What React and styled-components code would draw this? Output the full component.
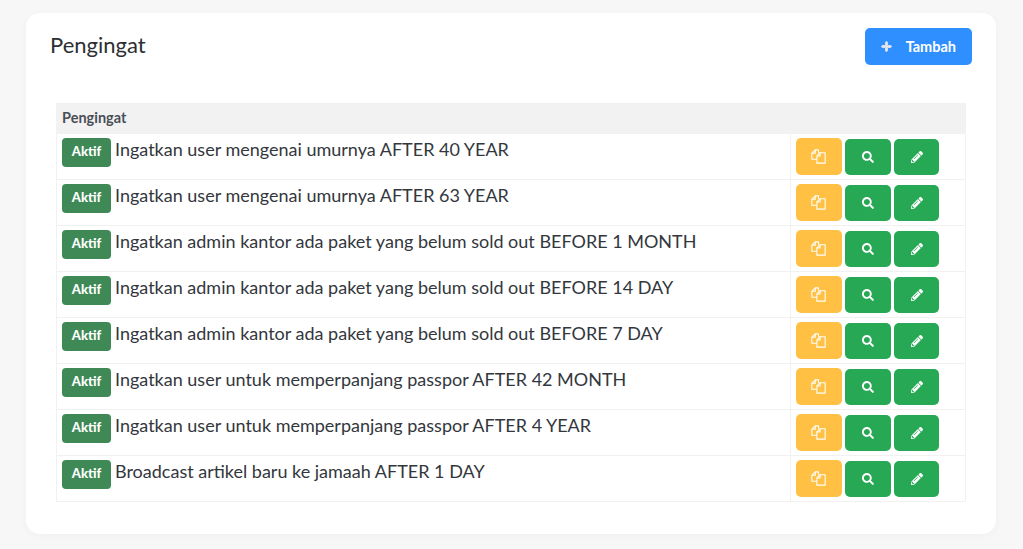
import styled, { createGlobalStyle } from 'styled-components';
import { FaPlus, FaSearch, FaPencilAlt } from 'react-icons/fa';

const GlobalStyle = createGlobalStyle`
  html, body {
    margin: 0;
    padding: 0;
    background-color: #f7f7f7;
    font-family: "Lato", "Noto Sans", sans-serif;
    overflow: hidden;
  }
`;

const Page = styled.div`
  height: 549px;
  padding: 13px 27px 15px 26px;
  box-sizing: border-box;
`;

const Card = styled.div`
  height: 521px;
  box-sizing: border-box;
  padding: 15px 24px 0 24px;
  background-color: #fff;
  border-radius: 14px;
  box-shadow: 0 2px 10px rgba(0, 0, 0, 0.03);
`;

const Header = styled.div`
  display: flex;
  justify-content: space-between;
  align-items: flex-start;
  height: 75px;
`;

const Title = styled.h2`
  margin: 4px 0 0;
  font-size: 22px;
  line-height: 26px;
  font-weight: 400;
  color: #2b2f33;
`;

const AddButton = styled.button`
  display: flex;
  align-items: center;
  gap: 14px;
  height: 37px;
  padding: 0 16px 1px;
  border: none;
  border-radius: 5px;
  background-color: #2f8fff;
  color: #fff;
  font-family: inherit;
  font-size: 14.5px;
  font-weight: 700;

  svg {
    font-size: 11px;
    color: #e3e7ec;
    stroke: currentColor;
    stroke-width: 40;
  }
`;

const Table = styled.table`
  width: 910px;
  margin-left: 6px;
  border-collapse: separate;
  border-spacing: 0;
  table-layout: fixed;
`;

const HeadCell = styled.th`
  box-sizing: border-box;
  height: 31px;
  width: ${(p) => (p.$actions ? '176px' : 'auto')};
  padding: 0 6px 2px;
  background-color: #f2f2f2;
  text-align: left;
  font-size: 14.5px;
  font-weight: 700;
  color: #4a4f57;
`;

const TextCell = styled.td`
  box-sizing: border-box;
  height: 46px;
  padding: 4px 5px 0 5px;
  border-left: 1px solid #f1f1f1;
  border-bottom: 1px solid #f1f1f1;
  vertical-align: top;
`;

const ActionCell = styled.td`
  box-sizing: border-box;
  height: 46px;
  padding: 4px 5px 0 5px;
  border-left: 1px solid #f1f1f1;
  border-right: 1px solid #f1f1f1;
  border-bottom: 1px solid #f1f1f1;
  vertical-align: top;
`;

const CellLine = styled.div`
  display: flex;
  align-items: flex-start;
  gap: 4px;
`;

const Badge = styled.span`
  display: inline-flex;
  align-items: center;
  justify-content: center;
  flex: none;
  box-sizing: border-box;
  width: 49px;
  height: 29px;
  padding-bottom: 3px;
  border-radius: 4px;
  background-color: #3e8955;
  color: #fff;
  font-size: 13px;
  font-weight: 900;
`;

const Message = styled.span`
  font-size: 18px;
  line-height: 22px;
  color: #33373d;
`;

const Actions = styled.div`
  display: flex;
  align-items: flex-end;
  gap: 3px;
`;

const ActionButton = styled.button`
  display: flex;
  align-items: center;
  justify-content: center;
  width: ${(p) => p.$width}px;
  height: ${(p) => p.$height}px;
  padding: 0;
  border: none;
  border-radius: 5px;
  background-color: ${(p) => p.$color};
  color: #fff;
  font-size: 12px;
`;

const CopySvg = styled.svg`
  margin-right: 1px;
  fill: none;
  stroke: #fff;
  stroke-width: 1;
  stroke-linejoin: round;
`;

const CopyIcon = () => (
  <CopySvg width="15" height="15" viewBox="0 0 14 14">
    <path d="M5.5 9.5H0.8V4L4 0.8H7V3.5" />
    <path d="M0.8 4H4V0.8" />
    <path d="M5.5 6.5L8.5 3.5H13.2V13.2H5.5Z" />
    <path d="M5.5 6.5H8.5V3.5" />
  </CopySvg>
);

const reminders = [
  'Ingatkan user mengenai umurnya AFTER 40 YEAR',
  'Ingatkan user mengenai umurnya AFTER 63 YEAR',
  'Ingatkan admin kantor ada paket yang belum sold out BEFORE 1 MONTH',
  'Ingatkan admin kantor ada paket yang belum sold out BEFORE 14 DAY',
  'Ingatkan admin kantor ada paket yang belum sold out BEFORE 7 DAY',
  'Ingatkan user untuk memperpanjang passpor AFTER 42 MONTH',
  'Ingatkan user untuk memperpanjang passpor AFTER 4 YEAR',
  'Broadcast artikel baru ke jamaah AFTER 1 DAY',
];

function App() {
  return (
    <Page>
      <GlobalStyle />
      <Card>
        <Header>
          <Title>Pengingat</Title>
          <AddButton>
            <FaPlus />
            Tambah
          </AddButton>
        </Header>
        <Table>
          <thead>
            <tr>
              <HeadCell>Pengingat</HeadCell>
              <HeadCell $actions />
            </tr>
          </thead>
          <tbody>
            {reminders.map((text) => (
              <tr key={text}>
                <TextCell>
                  <CellLine>
                    <Badge>Aktif</Badge>
                    <Message>{text}</Message>
                  </CellLine>
                </TextCell>
                <ActionCell>
                  <Actions>
                    <ActionButton $color="#ffc043" $width={46} $height={37}>
                      <CopyIcon />
                    </ActionButton>
                    <ActionButton $color="#27a854" $width={46} $height={36}>
                      <FaSearch />
                    </ActionButton>
                    <ActionButton $color="#27a854" $width={45} $height={36}>
                      <FaPencilAlt />
                    </ActionButton>
                  </Actions>
                </ActionCell>
              </tr>
            ))}
          </tbody>
        </Table>
      </Card>
    </Page>
  );
}

export default App;
